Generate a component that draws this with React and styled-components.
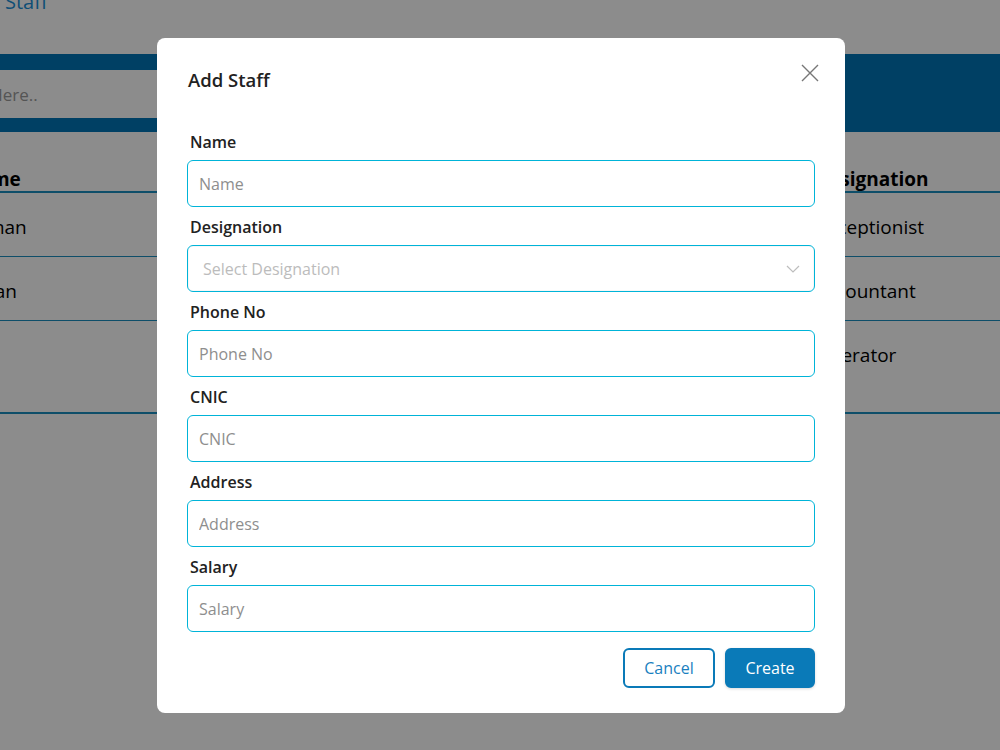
import React from "react";
import styled, { createGlobalStyle } from "styled-components";

const GlobalStyle = createGlobalStyle`
  html, body {
    margin: 0;
    padding: 0;
    background: #ffffff;
    font-family: "Open Sans", "Noto Sans", sans-serif;
    overflow: hidden;
  }
`;

const PageWrap = styled.div`
  width: 1100px;
  margin: 0 0 0 -44px;
`;

const PageTitle = styled.h2`
  margin: -12px 0 0 49px;
  height: 66px;
  font-size: 20px;
  font-weight: 400;
  color: #1a8fd8;
`;

const SearchBar = styled.div`
  background: #0076b6;
  height: 78px;
  padding: 16px 0;
  box-sizing: border-box;
`;

const SearchInput = styled.input`
  width: 460px;
  height: 48px;
  border: none;
  margin-left: -38px;
  padding: 0 14px;
  box-sizing: border-box;
  font-family: inherit;
  font-size: 17px;
  &::placeholder {
    color: #9a9a9a;
  }
`;

const Table = styled.div`
  margin-top: 34px;
  border-bottom: 2px solid #1a8fc0;
  padding-bottom: 28px;
`;

const Row = styled.div`
  display: grid;
  grid-template-columns: 851px 1fr;
  align-items: center;
  height: ${(p) => (p.head ? "25px" : p.last ? "59px" : "59px")};
  padding-top: ${(p) => (p.head ? "0" : "4px")};
  border-bottom: ${(p) => (p.head ? "2px solid #1a8fc0" : p.last ? "none" : "1px solid #1a8fc0")};
  font-size: 19px;
  font-weight: ${(p) => (p.head ? 700 : 400)};
  color: #000;
`;

const Cell = styled.div`
  padding-left: 8px;
`;

const Overlay = styled.div`
  position: fixed;
  inset: 0;
  background: rgba(0, 0, 0, 0.45);
  display: flex;
  justify-content: center;
  align-items: flex-start;
  padding-top: 38px;
`;

const Modal = styled.div`
  width: 688px;
  background: #ffffff;
  border-radius: 8px;
  padding: 28px 30px 25px;
  box-sizing: border-box;
  margin-left: 2px;
`;

const ModalHeader = styled.div`
  display: flex;
  justify-content: space-between;
  align-items: center;
  height: 26px;
  margin-bottom: 38px;
  padding-left: 1px;
`;

const ModalTitle = styled.h3`
  margin: 0;
  font-size: 18.5px;
  font-weight: 600;
  color: #222;
`;

const CloseButton = styled.button`
  border: none;
  background: none;
  padding: 0;
  margin: -12px -7px 0 0;
  width: 24px;
  height: 24px;
  display: flex;
  align-items: center;
  justify-content: center;
  cursor: pointer;
`;

const Form = styled.form`
  display: flex;
  flex-direction: column;
`;

const Field = styled.div`
  display: flex;
  flex-direction: column;
  margin-bottom: 8px;
`;

const Label = styled.label`
  font-size: 16px;
  font-weight: 600;
  color: #222;
  line-height: 24px;
  margin: 0 0 6px 3px;
`;

const TextInput = styled.input`
  height: 47px;
  border: 1px solid #00b4d8;
  border-radius: 6px;
  padding: 0 11px;
  box-sizing: border-box;
  font-family: inherit;
  font-size: 16px;
  outline: none;
  &::placeholder {
    color: #8e8e8e;
  }
`;

const SelectBox = styled.div`
  height: 47px;
  border: 1px solid #00b4d8;
  border-radius: 6px;
  padding: 0 14px 0 15px;
  box-sizing: border-box;
  display: flex;
  align-items: center;
  justify-content: space-between;
  font-size: 16px;
  color: #bcbcbc;
  box-shadow: inset 0 0 0 1px rgba(0, 0, 0, 0.03);
`;

const Actions = styled.div`
  display: flex;
  justify-content: flex-end;
  gap: 10px;
  margin-top: 8px;
`;

const Button = styled.button`
  height: 40px;
  min-width: ${(p) => (p.primary ? "90px" : "92px")};
  border-radius: 6px;
  border: 2px solid #0a7ab8;
  background: ${(p) => (p.primary ? "#0a7ab8" : "#ffffff")};
  color: ${(p) => (p.primary ? "#ffffff" : "#1a7fc0")};
  font-family: inherit;
  font-size: 16px;
  cursor: pointer;
  box-shadow: ${(p) => (p.primary ? "0 1px 3px rgba(0, 0, 0, 0.15)" : "none")};
`;

const staff = [
  { name: "Usman", designation: "Receptionist" },
  { name: "Imran", designation: "Accountant" },
  { name: "Ali", designation: "Operator" },
];

const fields = ["Name", "Designation", "Phone No", "CNIC", "Address", "Salary"];

export default function App() {
  return (
    <>
      <GlobalStyle />
      <PageWrap>
        <PageTitle>Staff</PageTitle>
        <SearchBar>
          <SearchInput placeholder="Search Here.." />
        </SearchBar>
        <Table>
          <Row head>
            <Cell>Name</Cell>
            <Cell>Designation</Cell>
          </Row>
          {staff.map((s, i) => (
            <Row key={s.name} last={i === staff.length - 1}>
              <Cell>{s.name}</Cell>
              <Cell>{s.designation}</Cell>
            </Row>
          ))}
        </Table>
      </PageWrap>
      <Overlay>
        <Modal>
          <ModalHeader>
            <ModalTitle>Add Staff</ModalTitle>
            <CloseButton aria-label="Close">
              <svg width="18" height="18" viewBox="0 0 18 18">
                <path d="M1 1L17 17M17 1L1 17" stroke="#777" strokeWidth="1.4" />
              </svg>
            </CloseButton>
          </ModalHeader>
          <Form>
            {fields.map((f) => (
              <Field key={f}>
                <Label>{f}</Label>
                {f === "Designation" ? (
                  <SelectBox>
                    <span>Select Designation</span>
                    <svg width="14" height="8" viewBox="0 0 14 8">
                      <path d="M1 1L7 7L13 1" stroke="#bdbdbd" strokeWidth="1.2" fill="none" />
                    </svg>
                  </SelectBox>
                ) : (
                  <TextInput placeholder={f} />
                )}
              </Field>
            ))}
            <Actions>
              <Button type="button">Cancel</Button>
              <Button type="button" primary>
                Create
              </Button>
            </Actions>
          </Form>
        </Modal>
      </Overlay>
    </>
  );
}
